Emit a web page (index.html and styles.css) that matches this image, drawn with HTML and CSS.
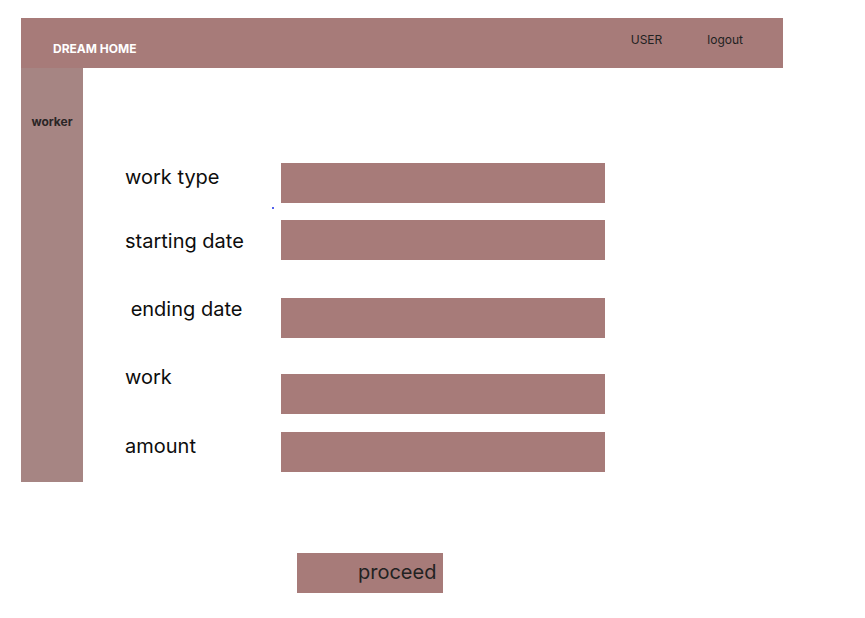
FILE: index.html
```
<!DOCTYPE html>
<html>
<head>
<meta charset="utf-8">
<link rel="stylesheet" href="styles.css">
</head>
<body>
<div class="page">
  <header class="topbar">
    <div class="brand">DREAM HOME</div>
    <nav class="nav">
      <span class="nav-user">USER</span>
      <span class="nav-logout">logout</span>
    </nav>
  </header>
  <div class="body-row">
    <aside class="sidebar">
      <div class="side-item">worker</div>
    </aside>
    <main class="main">
      <div class="form">
        <div class="labels">
          <div class="label l1">work type</div>
          <div class="label l2">starting date</div>
          <div class="label l3">&nbsp;ending date</div>
          <div class="label l4">work</div>
          <div class="label l5">amount</div>
        </div>
        <div class="inputs">
          <div class="dot"></div>
          <div class="field f1"></div>
          <div class="field f2"></div>
          <div class="field f3"></div>
          <div class="field f4"></div>
          <div class="field f5"></div>
        </div>
      </div>
      <div class="actions">
        <button class="proceed">proceed</button>
      </div>
    </main>
  </div>
</div>
</body>
</html>
```
FILE: styles.css
```
* { box-sizing: border-box; }
html, body { margin: 0; padding: 0; background: #fff; }
body { font-family: Inter, "Noto Sans", sans-serif; color: #111; }
.page { padding: 18px 0 0 21px; width: 865px; height: 618px; }
.topbar {
  width: 762px; height: 50px; background: #a77b79;
  display: flex; justify-content: space-between; align-items: flex-start;
}
.brand { color: #fff; font-weight: 700; font-size: 12px; line-height: 15px; padding: 23px 0 0 32px; }
.nav { display: flex; gap: 45px; padding: 14px 40px 0 0; font-size: 12px; line-height: 15px; color: #222; }
.body-row { display: flex; }
.sidebar { width: 62px; height: 414px; background: #a68583; padding-top: 46px; }
.side-item { font-size: 12px; font-weight: 700; color: #2b2626; text-align: center; line-height: 15px; }
.main { flex: 1; padding: 95px 0 0 42px; }
.form { display: flex; }
.labels { width: 156px; padding-top: 2px; }
.label { font-size: 20px; line-height: 24px; color: #0d0d0d; }
.l2 { margin-top: 40px; }
.l3 { margin-top: 44px; }
.l4 { margin-top: 44px; }
.l5 { margin-top: 45px; }
.inputs { position: relative; }
.field { width: 324px; height: 40px; background: #a77b79; }
.f2 { margin-top: 17px; }
.f3 { margin-top: 38px; }
.f4 { margin-top: 36px; }
.f5 { margin-top: 18px; }
.dot { position: absolute; left: -9px; top: 44px; width: 2px; height: 2px; background: #1a2ee6; border-radius: 50%; }
.actions { padding: 81px 0 0 172px; }
.proceed {
  width: 146px; height: 40px; background: #a77b79; border: 0; margin: 0;
  font-family: Inter, "Noto Sans", sans-serif; font-size: 20px; color: #222;
  text-align: left; padding: 0 0 2px 61px; line-height: 24px;
}
```
